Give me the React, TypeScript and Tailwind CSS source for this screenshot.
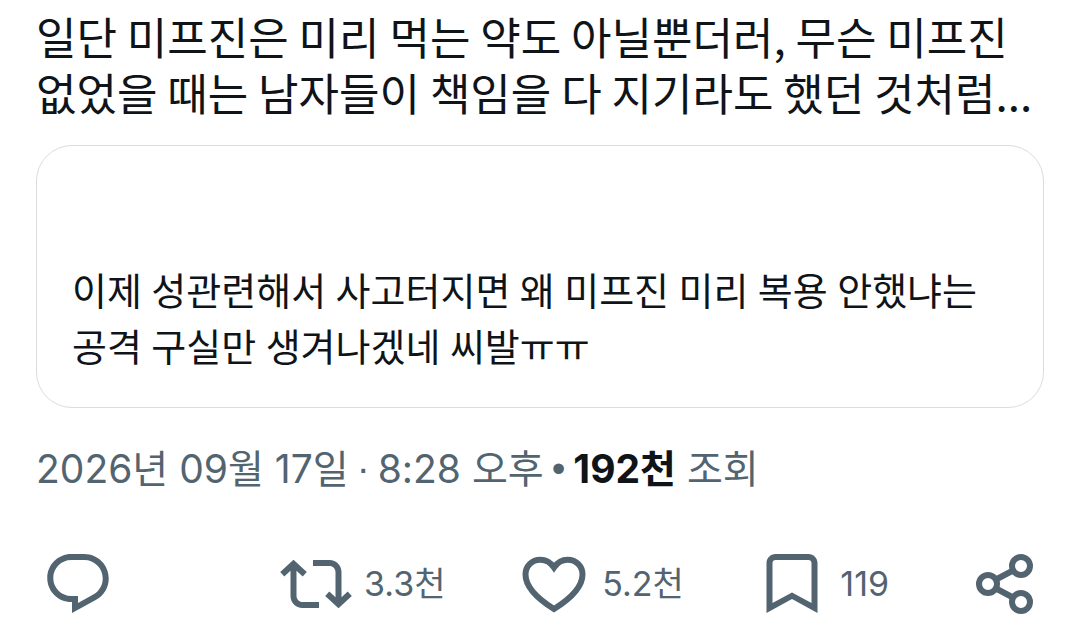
import type { ReactNode } from 'react';

interface ActionProps {
  label: string;
  count?: string;
  children: ReactNode;
}

function Action({ label, count, children }: ActionProps) {
  return (
    <button type="button" aria-label={label} className="flex items-center gap-3 text-left">
      <svg viewBox="0 0 72 72" className="size-[72px] shrink-0" fill="currentColor" aria-hidden="true">
        {children}
      </svg>
      {count && <span className="text-[34px] leading-[48px]">{count}</span>}
    </button>
  );
}

function QuotedPost() {
  return (
    <blockquote className="mt-[25px] rounded-[36px] border border-[#d9dddf] px-[35px] pt-[118px] pb-[31px]">
      <p className="font-['Roboto','Noto_Sans_CJK_KR',sans-serif] text-[38px] leading-[56px]">
        이제 성관련해서 사고터지면 왜 미프진 미리 복용 안했냐는
        <br />
        공격 구실만 생겨나겠네 씨발ㅠㅠ
      </p>
    </blockquote>
  );
}

function PostMeta() {
  return (
    <div className="mt-[33px] flex gap-2 text-[39px] leading-[56px] whitespace-nowrap text-[#536471]">
      <span>2026년 09월 17일</span>
      <span className="font-['Liberation_Sans',sans-serif]">·</span>
      <span>8:28 오후</span>
      <span className="font-['Liberation_Sans',sans-serif]">•</span>
      <span>
        <strong className="font-bold text-[#0f1419]">192천</strong> 조회
      </span>
    </div>
  );
}

function Actions() {
  return (
    <div className="mt-[51px] grid grid-cols-[9fr_9fr_9fr_8fr_auto] pr-1 pl-[6px] text-[#536471]">
      <Action label="답글">
        <path
          transform="scale(3)"
          d="M1.751 10c0-4.42 3.584-8 8.005-8h4.366c4.49 0 8.129 3.64 8.129 8.13 0 2.96-1.607 5.68-4.196 7.11l-8.054 4.46v-3.69h-.067c-4.49.1-8.183-3.51-8.183-8.01zm8.005-6c-3.317 0-6.005 2.69-6.005 6 0 3.37 2.77 6.08 6.138 6.01l.351-.01h1.761v2.3l5.087-2.81c1.951-1.08 3.163-3.13 3.163-5.36 0-3.39-2.744-6.13-6.129-6.13H9.756z"
        />
      </Action>
      <Action label="재게시" count="3.3천">
        <path
          transform="scale(3)"
          d="M4.5 3.88l4.432 4.14-1.364 1.46L5.5 7.55V16c0 1.1.896 2 2 2H13v2H7.5c-2.209 0-4-1.79-4-4V7.55L1.432 9.48.068 8.02 4.5 3.88zM16.5 6H11V4h5.5c2.209 0 4 1.79 4 4v8.45l2.068-1.93 1.364 1.46-4.432 4.14-4.432-4.14 1.364-1.46 2.068 1.93V8c0-1.1-.896-2-2-2z"
        />
      </Action>
      <Action label="마음에 들어요" count="5.2천">
        <path
          fill="none"
          stroke="currentColor"
          strokeWidth="6"
          d="M36 19.5C32.5 14.5 28 11.8 22.5 11.8C13.5 11.8 7.5 18.5 7.5 26.5C7.5 40 20 51 36 61C52 51 64.5 40 64.5 26.5C64.5 18.5 58.5 11.8 49.5 11.8C44 11.8 39.5 14.5 36 19.5Z"
        />
      </Action>
      <Action label="북마크" count="119">
        <path
          fillRule="evenodd"
          d="M10.5 65V15C10.5 10 14.5 6 19.5 6H52.5C57.5 6 61.5 10 61.5 15V65L36 51ZM16.5 55L36 44.5L55.5 55V15C55.5 13.3 54.2 12 52.5 12H19.5C17.8 12 16.5 13.3 16.5 15Z"
        />
      </Action>
      <Action label="공유">
        <g fill="none" stroke="currentColor" strokeWidth="6">
          <circle cx="53" cy="18" r="9" />
          <circle cx="20" cy="36" r="9" />
          <circle cx="53" cy="54" r="9" />
          <path d="M28 31.5L45 22.5M28 40.5L45 49.5" />
        </g>
      </Action>
    </div>
  );
}

export default function App() {
  return (
    <main className="min-h-screen bg-white px-9 pt-2 font-['Inter','Noto_Sans_CJK_KR',sans-serif] text-[#0f1419]">
      <article>
        <p className="font-['Noto_Sans_CJK_KR',sans-serif] text-[44px] leading-[56px]">
          일단 미프진은 미리 먹는 약도 아닐뿐더러, 무슨 미프진
          <br />
          없었을 때는 남자들이 책임을 다 지기라도 했던 것처럼...
        </p>
        <QuotedPost />
        <PostMeta />
        <Actions />
      </article>
    </main>
  );
}
